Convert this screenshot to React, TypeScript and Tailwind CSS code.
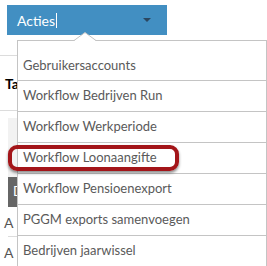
const items = [
  'Workflow Bedrijven Run',
  'Workflow Werkperiode',
  'Workflow Loonaangifte',
  'Workflow Pensioenexport',
  'PGGM exports samenvoegen',
  'Bedrijven jaarwissel',
];

function App() {
  return (
    <div className="relative w-[267px] h-[266px] overflow-hidden bg-white font-['Lato','Liberation_Sans',sans-serif]">
      {/* Acties button */}
      <div className="ml-[7px] mt-[5px] w-[160px] h-[30px] bg-[#428fc2] flex items-center justify-between pl-[10px] pr-[16px]">
        <div className="flex items-center text-[14px] text-white">
          <span>Acties</span>
          <span className="ml-[1px] w-px h-[15px] bg-white" />
        </div>
        <div className="w-0 h-0 border-l-[4px] border-r-[4px] border-t-[4px] border-l-transparent border-r-transparent border-t-[#2b4760]" />
      </div>

      {/* table behind, only its left edge shows */}
      <div className="mt-[20px] border-t border-[#dcdcdc]">
        <div className="h-[55px] flex items-center pl-[5px] text-[14px] font-bold text-black border-b border-[#dcdcdc]">
          Ta
        </div>
        <div className="ml-[8px] mt-[7px] h-[59px] bg-[#f2f2f2]" />
        <div className="ml-[8px] h-[30px] bg-[#666] flex items-center pl-[5px] text-[13px] text-white">
          D
        </div>
        <div className="h-[30px] flex items-center pl-[4px] text-[14px] text-[#555] relative">
          A
          <div className="absolute left-[8px] right-0 bottom-0 h-px bg-[#dcdcdc]" />
        </div>
        <div className="h-[30px] flex items-center pl-[4px] text-[14px] text-[#555]">A</div>
      </div>

      {/* dropdown menu */}
      <div className="absolute left-[17px] top-[40px] w-[250px] bg-white border border-[#c4c4c4] text-[13px] text-[#5a5a5a]">
        <div className="h-[40px] pt-[10px] pl-[5px] flex items-center border-b border-[#c4c4c4]">
          Gebruikersaccounts
        </div>
        {items.map((label) => (
          <div key={label} className="h-[31px] pl-[5px] flex items-center border-b border-[#c4c4c4]">
            {label}
          </div>
        ))}
      </div>

      {/* arrow of the menu */}
      <svg className="absolute left-[74px] top-[32px]" width="22" height="9" viewBox="0 0 22 9">
        <polygon points="0,9 11,0.5 22,9" fill="#fff" />
        <polyline points="0,8.5 11,0.5 22,8.5" fill="none" stroke="#c4c4c4" strokeWidth="1" />
      </svg>

      {/* highlight */}
      <div className="absolute left-[8px] top-[145px] w-[171px] h-[26px] border-[4px] border-[#a31519] rounded-[9px] shadow-[0_2px_3px_rgba(0,0,0,0.45)]" />
    </div>
  );
}

export default App;
